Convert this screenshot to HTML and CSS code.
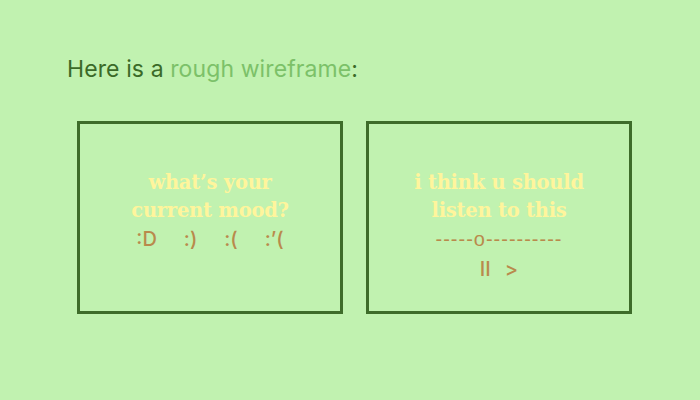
FILE: index.html
```html
<!DOCTYPE html>
<html>
<head>
<meta charset="utf-8">
<link rel="stylesheet" href="styles.css">
</head>
<body>
<main class="page">
  <h1 class="heading">Here is a <span class="accent">rough wireframe</span>:</h1>
  <div class="cards">
    <section class="card">
      <h2 class="title">what’s your<br>current mood?</h2>
      <div class="moods"><span>:D</span><span>:)</span><span>:(</span><span>:’(</span></div>
    </section>
    <section class="card">
      <h2 class="title">i think u should<br>listen to this</h2>
      <div class="line">-----o----------</div>
      <div class="controls"><span>II</span><span>&gt;</span></div>
    </section>
  </div>
</main>
</body>
</html>
```
FILE: styles.css
```css
html, body {
  margin: 0;
  padding: 0;
  background: #c1f2b0;
}
.page {
  width: 700px;
  height: 400px;
  box-sizing: border-box;
  padding: 54px 0 0 67px;
}
.heading {
  margin: 0;
  font-family: Inter, "Liberation Sans", sans-serif;
  font-weight: 400;
  font-size: 23px;
  line-height: 30px;
  color: #3b6a28;
  letter-spacing: 0.1px;
}
.accent {
  color: #7cc169;
}
.cards {
  display: flex;
  gap: 23px;
  margin: 37px 0 0 10px;
}
.card {
  width: 266px;
  height: 193px;
  box-sizing: border-box;
  border: 3px solid #3e6c2a;
  display: flex;
  flex-direction: column;
  align-items: center;
  padding-top: 45px;
}
.title {
  margin: 0;
  font-family: "DejaVu Serif", serif;
  font-weight: 700;
  font-size: 19.5px;
  line-height: 28px;
  text-align: center;
  color: #fff59c;
  letter-spacing: -0.25px;
}
.moods, .line, .controls {
  font-family: Inter, "Liberation Sans", sans-serif;
  font-size: 20px;
  font-weight: 500;
  line-height: 29px;
  color: #b98a4c;
}
.moods {
  display: flex;
  gap: 27px;
}
.line {
  font-family: "Liberation Sans", Arial, sans-serif;
  font-weight: 400;
  letter-spacing: 1px;
}
.controls {
  display: flex;
  gap: 14px;
  margin-top: 1px;
}
```
